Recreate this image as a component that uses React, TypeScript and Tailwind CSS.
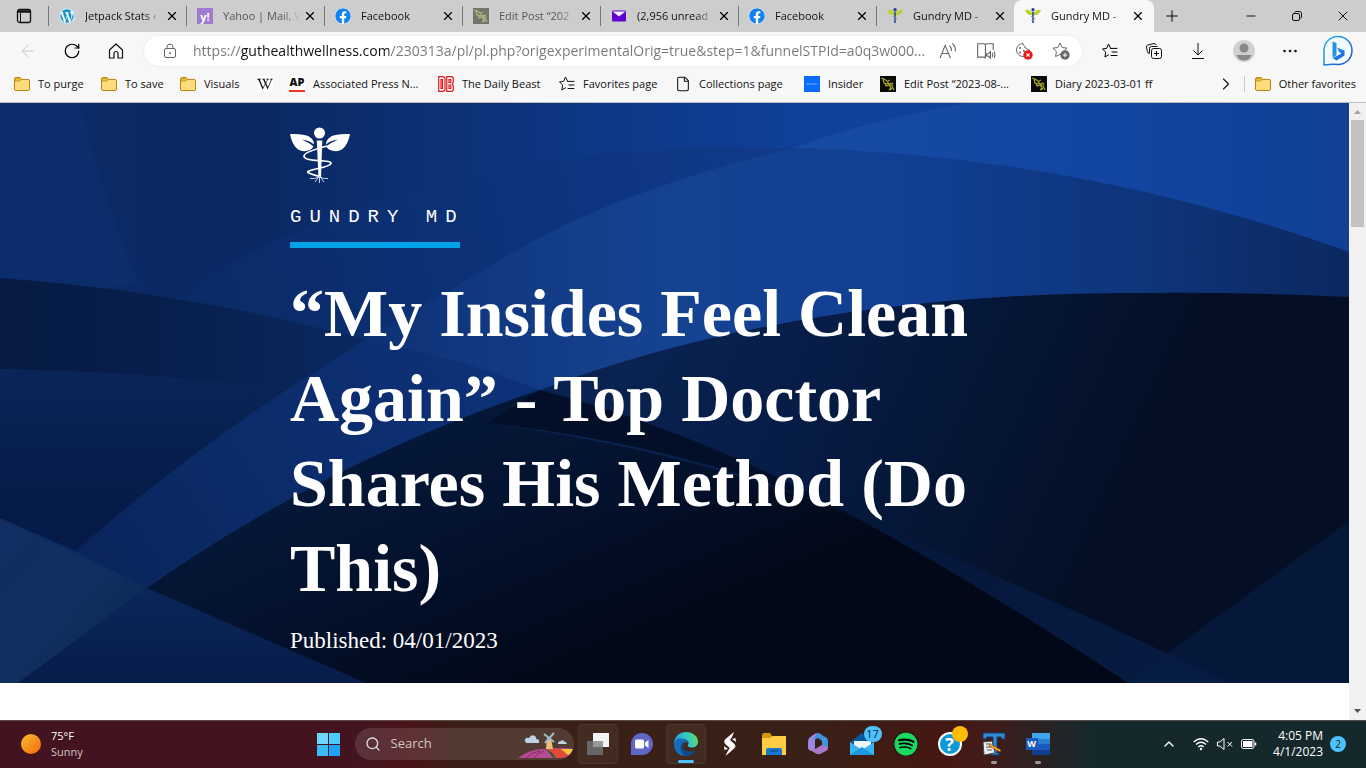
import React from "react";
import {
  ArrowLeft,
  ChevronRight,
  ChevronUp,
  File,
  Lock,
  Minus,
  Plus,
  RotateCw,
  Search,
  X,
} from "lucide-react";
import { FaFacebook, FaSpotify, FaWikipediaW, FaWordpress } from "react-icons/fa";

const FolderIcon = () => (
  <svg className="h-4 w-4 shrink-0" viewBox="0 0 16 16">
    <path d="M.5 3.2A1.7 1.7 0 0 1 2.2 1.5H6L7.5 3.4H14A1.5 1.5 0 0 1 15.5 5v8A1.5 1.5 0 0 1 14 14.5H2A1.5 1.5 0 0 1 .5 13z" fill="#ffdc7c" stroke="#b8860b" />
    <path d="M1 5V3.2Q1 2 2.2 2H5.8L7 3.6 5.8 5z" fill="#eebd3b" stroke="#b8860b" strokeWidth=".7" />
  </svg>
);

const GundryLeaf = () => (
  <svg className="h-4 w-4 shrink-0" viewBox="0 0 16 16">
    <path d="M0 2Q5 1 7 4.5L7 7Q2 8 0 2zM16 2Q11 1 9 4.5L9 7Q14 8 16 2z" fill="#b6d433" />
    <circle cx="8" cy="1.8" r="1.7" fill="#27408b" />
    <path d="M8 4v11" stroke="#3c5590" strokeWidth="1.8" />
    <path d="M6 8.5q4 1 4 2t-3.5 2" stroke="#7f93bd" fill="none" />
  </svg>
);

const SketchIcon = ({ faded }: { faded?: boolean }) => (
  <svg className="h-4 w-4 shrink-0" viewBox="0 0 16 16">
    <rect width="16" height="16" fill={faded ? "#74746c" : "#0b0b06"} />
    <path d="M1 2l3 1 3 2 2 3 3 2 2 4M3 3l1 4 4 1M5 7l1 3 3-1 2 3-2 2M8 5l2-1M9 8l3-1 1 2M12 12l-2 2" stroke={faded ? "#b5b878" : "#a7a52d"} strokeWidth="1.2" fill="none" />
  </svg>
);

const StarList = ({ className }: { className: string }) => (
  <svg className={className} viewBox="0 0 16 16" fill="none" stroke="currentColor" strokeLinecap="round" strokeLinejoin="round">
    <path d="M8.6 5.4 6.5 1 4.700 5.3.5 6l3.2 3-.8 5 3.6-2.200M8.600 5.400H15M10 9h5M9 12.500h6" />
  </svg>
);

const YahooIcon = () => (
  <span className="flex h-4 w-4 shrink-0 items-center justify-center bg-[#a17bd0] text-[11px] leading-none font-bold text-white">y!</span>
);

const MailSmall = () => (
  <svg className="h-4 w-4 shrink-0" viewBox="0 0 16 16">
    <rect x="1" y="2.5" width="14" height="11" rx="1" fill="#6001d2" />
    <path d="M1.5 3.5h13L8 8.5z" fill="#f4e8ff" />
  </svg>
);

const facebook = <FaFacebook className="h-4 w-4 shrink-0 rounded-full bg-white text-[#0f82f5]" />;

const tabs = [
  { icon: <FaWordpress className="h-4 w-4 shrink-0 rounded-full bg-white text-[#1794c4]" />, title: "Jetpack Stats ‹" },
  { icon: <YahooIcon />, title: "Yahoo | Mail, V", faded: true },
  { icon: facebook, title: "Facebook" },
  { icon: <SketchIcon faded />, title: "Edit Post “202", faded: true },
  { icon: <MailSmall />, title: "(2,956 unread" },
  { icon: facebook, title: "Facebook" },
  { icon: <GundryLeaf />, title: "Gundry MD -" },
  { icon: <GundryLeaf />, title: "Gundry MD -", active: true },
];

const favorites = [
  { width: "w-[71px]", icon: <FolderIcon />, label: "To purge" },
  { width: "w-[63px]", icon: <FolderIcon />, label: "To save" },
  { width: "w-[61px]", icon: <FolderIcon />, label: "Visuals" },
  { width: "w-4", icon: <FaWikipediaW className="h-4 w-4 shrink-0 rounded bg-white" />, label: "" },
  {
    width: "w-[133px]",
    icon: <span className="flex h-4 w-4 shrink-0 justify-center border-b-2 border-[#f0322d] bg-white text-[11px] leading-3 font-black">AP</span>,
    label: "Associated Press N...",
  },
  {
    width: "w-[105px]",
    icon: (
      <svg className="h-4 w-4 shrink-0" viewBox="0 0 16 16" fill="#fff" stroke="#e3151a" strokeWidth="1.2">
        <path d="M.7.7h4Q7 .7 7 3v10q0 2.3-2.3 2.3h-4zM3 3.500v9h1.500v-9zM8.800.7h4Q15.300.7 15.300 3v3l-1 2 1 2v3q0 2.300-2.300 2.300H8.800zM11 3.500v3h1.800v-3zM11 9v3.500h1.800V9z" />
      </svg>
    ),
    label: "The Daily Beast",
  },
  { width: "w-[100px]", icon: <StarList className="h-4 w-4 shrink-0" />, label: "Favorites page" },
  { width: "w-[113px]", icon: <File className="h-4 w-4 shrink-0" strokeWidth={1.6} />, label: "Collections page" },
  {
    width: "w-[60px]",
    icon: (
      <svg className="h-4 w-4 shrink-0" viewBox="0 0 16 16">
        <rect width="16" height="16" fill="#0a6cff" />
        <path d="M2.5 8h11" stroke="#8dbcff" strokeDasharray="1.5 .5" />
      </svg>
    ),
    label: "Insider",
  },
  { width: "w-[135px]", icon: <SketchIcon />, label: "Edit Post “2023-08-..." },
  { width: "w-[128px]", icon: <SketchIcon />, label: "Diary 2023-03-01 ff" },
];

const TabStrip = () => (
  <div className="flex h-8 bg-[#cdcdcd]">
    <button aria-label="Tab actions" className="flex w-12 shrink-0 items-center justify-center">
      <svg className="h-4 w-4" viewBox="0 0 16 16" fill="none" stroke="#111">
        <rect x="1.5" y="1.5" width="13" height="13" rx="2" strokeWidth="1.3" />
        <path d="M2 3.5h12" strokeWidth="2.500" />
        <path d="M4.5 5v9" />
      </svg>
    </button>
    <div role="tablist" className="flex min-w-0">
      {tabs.map((tab, i) => (
        <div
          key={i}
          className={
            tab.active
              ? "flex w-[140px] items-center rounded-t-lg bg-[#f7f7f7] pl-[11px]"
              : "flex w-[138px] items-center bg-[linear-gradient(#777,#777)] bg-[length:1px_20px] bg-[position:0_6px] bg-no-repeat pl-[11px]"
          }
        >
          {tab.icon}
          <button
            role="tab"
            aria-selected={!!tab.active}
            className={
              "ml-2.5 w-[78px] text-left text-[11px] whitespace-nowrap [mask-image:linear-gradient(to_right,black_75%,transparent)] " +
              (tab.faded ? "text-[#555]" : "text-[#111]")
            }
          >
            {tab.title}
          </button>
          <button aria-label="Close tab" className="ml-px flex h-4 w-4 items-center justify-center">
            <X className="h-3.5 w-3.5" strokeWidth={2} />
          </button>
        </div>
      ))}
    </div>
    <button aria-label="New tab" className="flex w-9 items-center justify-center">
      <Plus className="h-[18px] w-[18px]" strokeWidth={1.3} />
    </button>
    <div className="ml-auto flex">
      <button aria-label="Minimize" className="flex w-[46px] items-center justify-center">
        <Minus className="h-3.5 w-3.5" strokeWidth={1.5} />
      </button>
      <button aria-label="Restore" className="flex w-[46px] items-center justify-center">
        <svg className="h-2.5 w-2.5" viewBox="0 0 10 10" fill="none" stroke="#111">
          <rect x=".5" y="2.5" width="7" height="7" rx="1.5" />
          <path d="M2.5 1.5Q3 .5 4 .5h3.500a2 2 0 0 1 2 2V6q0 1-1 1.500" />
        </svg>
      </button>
      <button aria-label="Close" className="flex w-[46px] items-center justify-center">
        <X className="h-4 w-4" strokeWidth={1.4} />
      </button>
    </div>
  </div>
);

const AddressBar = () => (
  <div className="mx-1.5 flex h-[30px] min-w-0 flex-1 items-center rounded-full bg-white pr-3 pl-[18px] shadow-[0_0_3px_rgba(0,0,0,0.08)]">
    <svg className="h-4 w-4 shrink-0" viewBox="0 0 16 16" fill="none" stroke="#666">
      <rect x="2.5" y="5.5" width="11" height="9" rx="1.5" />
      <path d="M5 5.500V4a3 3 0 0 1 6 0v1.500" />
      <circle cx="8" cy="10" r=".6" fill="#666" />
    </svg>
    <input
      aria-label="Address"
      className="ml-[15px] min-w-0 flex-1 bg-[linear-gradient(to_right,#767676_48px,#111_48px,#111_196px,#767676_196px)] bg-clip-text text-sm text-transparent outline-none"
      defaultValue="https://guthealthwellness.com/230313a/pl/pl.php?origexperimentalOrig=true&step=1&funnelSTPId=a0q3w000..."
    />
    <div className="flex shrink-0 gap-[19px] text-[#666]">
      <button aria-label="Read aloud">
        <svg className="h-[18px] w-[18px]" viewBox="0 0 16 16" fill="none" stroke="currentColor" strokeLinecap="round">
          <path d="M1 14 5.500 3 10 14M2.600 10.200h5.800M9.500 3.500q1.700 1.500 1.500 4M12 1.500q3 2.500 2.500 6.500" />
        </svg>
      </button>
      <button aria-label="Immersive reader">
        <svg className="h-[18px] w-5" viewBox="0 0 18 16" fill="none" stroke="currentColor">
          <path d="M8.500 2.500Q8 1.500 7 1.500H1.500v12H7q1 0 1.500 1M8.500 2.500v12M8.500 2.500Q9 1.500 10 1.500h5.500V7" />
          <path d="M9.500 10.500h1.500l2-2v6l-2-2H9.500zM14.500 9.500q1 2 0 4M16.300 8.500q1.300 3 0 6" />
        </svg>
      </button>
      <button aria-label="Cookies blocked">
        <svg className="h-[18px] w-[18px]" viewBox="0 0 18 18">
          <path d="M8 1.500A6.500 6.500 0 1 0 14.500 8q-2 .5-2.500-1.500Q9.500 6.500 9.500 4 8 3.500 8 1.500z" fill="none" stroke="currentColor" />
          <circle cx="5" cy="6" r="1" fill="currentColor" />
          <circle cx="5" cy="10.500" r="1" fill="currentColor" />
          <circle cx="9" cy="9" r="1" fill="currentColor" />
          <circle cx="13" cy="13" r="4.700" fill="#f01414" />
          <path d="m11.400 11.400 3.200 3.200m0-3.200-3.200 3.200" stroke="#fff" strokeWidth="1.200" />
        </svg>
      </button>
      <button aria-label="Add to favorites">
        <svg className="h-[18px] w-[18px]" viewBox="0 0 18 18">
          <path d="M8 1l2.200 4.500 4.900.7-3.500 3.400.8 5L8 12.300 3.600 14.600l.8-5L.9 6.200l4.900-.7z" fill="none" stroke="currentColor" strokeLinejoin="round" />
          <circle cx="13" cy="13" r="4.700" fill="#666" />
          <path d="M13 10.700v4.600M10.700 13h4.600" stroke="#fff" />
        </svg>
      </button>
    </div>
  </div>
);

const Toolbar = () => (
  <div className="flex h-[38px] items-center pl-1.5">
    <button aria-label="Back" className="flex w-11 justify-center text-[#c8c8c8]">
      <ArrowLeft className="h-5 w-5" strokeWidth={1.2} />
    </button>
    <button aria-label="Refresh" className="flex w-11 justify-center">
      <RotateCw className="h-[18px] w-[18px]" strokeWidth={1.6} />
    </button>
    <button aria-label="Home" className="flex w-11 justify-center">
      <svg className="h-4 w-4" viewBox="0 0 16 16" fill="none" stroke="#111" strokeWidth="1.2" strokeLinejoin="round">
        <path d="M1.500 7 8 1l6.500 6v8H10v-4.500a2 2 0 0 0-4 0V15H1.500z" />
      </svg>
    </button>
    <AddressBar />
    <button aria-label="Favorites" className="flex w-11 justify-center">
      <StarList className="h-4 w-4" />
    </button>
    <button aria-label="Collections" className="flex w-11 justify-center">
      <svg className="h-4 w-4" viewBox="0 0 16 16" fill="none" stroke="#111" strokeLinejoin="round">
        <path d="M3 10.500Q1.500 10 1.300 8.500L.5 4Q.3 2.500 1.800 2L8 .6q1.500-.3 2.200 1.400" />
        <rect x="5.500" y="5.500" width="10" height="10" rx="2" />
        <path d="M3.500 10.500v-5q0-2 2-2h6M10.500 8v5M8 10.500h5" />
      </svg>
    </button>
    <button aria-label="Downloads" className="flex w-11 justify-center">
      <svg className="h-4 w-4" viewBox="0 0 16 16" fill="none" stroke="#111">
        <path d="M8 0v12M3.500 7.500 8 12l4.500-4.500M2 15.500h12" />
      </svg>
    </button>
    <button aria-label="Profile" className="flex w-12 justify-center">
      <svg className="h-[22px] w-[22px]" viewBox="0 0 22 22">
        <circle cx="11" cy="11" r="11" fill="#d2d0ce" />
        <circle cx="11" cy="8" r="4.500" fill="#8a8886" />
        <path d="M3.500 15h15q-2 5.500-7.500 5.500T3.500 15z" fill="#8a8886" />
      </svg>
    </button>
    <button aria-label="Settings and more" className="flex w-11 justify-center">
      <svg className="h-4 w-4" viewBox="0 0 16 16" fill="#111">
        <circle cx="2.500" cy="8" r="1.300" />
        <circle cx="8" cy="8" r="1.300" />
        <circle cx="13.500" cy="8" r="1.300" />
      </svg>
    </button>
    <button aria-label="Bing" className="flex w-[54px] justify-center pr-0.5">
      <svg className="h-8 w-8" viewBox="0 0 32 32">
        <defs>
          <linearGradient id="bing" x1="0" y1="0" x2="1" y2="1">
            <stop stopColor="#27b7ee" />
            <stop offset="1" stopColor="#174ed0" />
          </linearGradient>
        </defs>
        <path d="M2 30V15A14 14 0 1 1 16 29.500Q10 29 2 30z" fill="#f4fbff" stroke="url(#bing)" strokeWidth="1.500" />
        <path d="M10.500 6.500l4 1.500v12l-4 3z" fill="#2394ec" />
        <path d="M10.500 23l4 2.500 8-5v-5l-7.500-3 2 4.500 2.500 1.500z" fill="url(#bing)" />
      </svg>
    </button>
  </div>
);

const FavoritesBar = () => (
  <nav className="flex h-[33px] items-center border-b border-[#bdbdbd] pr-2.5 pb-1 pl-3.5 text-[11px] text-[#111]">
    <div className="flex min-w-0 gap-4 overflow-hidden">
      {favorites.map((item) => (
        <a key={item.label} href="#" className={"flex shrink-0 items-center gap-2 whitespace-nowrap " + item.width}>
          {item.icon}
          {item.label}
        </a>
      ))}
    </div>
    <button aria-label="More favorites" className="ml-auto">
      <ChevronRight className="h-5 w-5" strokeWidth={1.3} />
    </button>
    <span className="mr-2.5 ml-2 h-4 w-px bg-[#c8c8c8]" />
    <a href="#" className="flex items-center gap-2 whitespace-nowrap">
      <FolderIcon />
      Other favorites
    </a>
  </nav>
);

const HeroBackground = () => (
  <svg className="absolute inset-0 h-full w-full" viewBox="0 103 1349 580" preserveAspectRatio="none">
    <defs>
      <linearGradient id="base" x1="0" x2="1" y1="0" y2="0">
        <stop stopColor="#0b2a66" />
        <stop offset=".2" stopColor="#0a2964" />
        <stop offset=".4" stopColor="#0d357f" />
        <stop offset=".6" stopColor="#10409a" />
        <stop offset="1" stopColor="#123f95" />
      </linearGradient>
      <linearGradient id="under" gradientUnits="userSpaceOnUse" x1="223" x2="780" y1="300" y2="150">
        <stop stopColor="#0b2b68" />
        <stop offset=".5" stopColor="#0c3279" />
        <stop offset="1" stopColor="#103a8a" />
      </linearGradient>
      <linearGradient id="sky" x1="0" x2="1" y1="0" y2="0">
        <stop stopColor="#174aa2" />
        <stop offset=".5" stopColor="#1246a3" />
        <stop offset="1" stopColor="#103f95" />
      </linearGradient>
      <linearGradient id="ray" gradientUnits="userSpaceOnUse" x1="360" x2="1349" y1="0" y2="0">
        <stop stopColor="#0e3175" />
        <stop offset=".3" stopColor="#154290" />
        <stop offset=".55" stopColor="#113f93" />
        <stop offset=".8" stopColor="#0e3479" />
        <stop offset="1" stopColor="#0b2860" />
      </linearGradient>
      <linearGradient id="tail" gradientUnits="userSpaceOnUse" x1="480" x2="60" y1="350" y2="640">
        <stop stopColor="#0d3178" />
        <stop offset=".6" stopColor="#0b2a66" />
        <stop offset="1" stopColor="#092256" />
      </linearGradient>
      <linearGradient id="band" x1="0" x2="1" y1="0" y2="0">
        <stop stopColor="#061a42" />
        <stop offset=".6" stopColor="#082150" />
        <stop offset="1" stopColor="#0a2860" />
      </linearGradient>
      <linearGradient id="slope" x1="0" x2="0" y1="0" y2="1">
        <stop stopColor="#0a2558" />
        <stop offset=".8" stopColor="#051a46" />
        <stop offset="1" stopColor="#061b47" />
      </linearGradient>
      <linearGradient id="dune" gradientUnits="userSpaceOnUse" x1="620" x2="1080" y1="390" y2="600">
        <stop stopColor="#09224f" />
        <stop offset=".3" stopColor="#071d48" />
        <stop offset=".65" stopColor="#051635" />
        <stop offset="1" stopColor="#040f25" />
      </linearGradient>
      <linearGradient id="deep" gradientUnits="userSpaceOnUse" x1="440" x2="540" y1="440" y2="683">
        <stop stopColor="#051737" />
        <stop offset=".5" stopColor="#03102a" />
        <stop offset="1" stopColor="#020817" />
      </linearGradient>
      <linearGradient id="glint" gradientUnits="userSpaceOnUse" x1="855" x2="1170" y1="517" y2="683">
        <stop stopColor="#05173a" />
        <stop offset="1" stopColor="#071a41" />
      </linearGradient>
      <linearGradient id="corner" x1="0" x2="1" y1="0" y2="1">
        <stop stopColor="#102e62" />
        <stop offset=".5" stopColor="#10305f" />
        <stop offset="1" stopColor="#0a2450" />
      </linearGradient>
      <linearGradient id="foot" x1="0" x2="0" y1="0" y2="1">
        <stop stopColor="#0a2759" />
        <stop offset="1" stopColor="#071c49" />
      </linearGradient>
    </defs>
    <rect y="103" width="1349" height="580" fill="url(#base)" />
    <path d="M0 103H80Q100 190 138 284L0 300z" fill="#0d3072" opacity=".6" />
    <path d="M138 340Q210 276 223 269 430 150 745 147L793 148 400 420H200z" fill="url(#under)" />
    <path d="M793 148Q870 120 967 103H1349V252Q1080 155 793 148z" fill="url(#sky)" />
    <path d="M0 278Q190 292 366 340L223 436 76 551 0 518z" fill="url(#band)" />
    <path d="M0 369Q140 371 290 390L223 436 76 551 0 518z" fill="url(#slope)" />
    <path d="M366 340Q200 440 76 551L147 588 540 470V386Q450 355 366 340z" fill="url(#tail)" />
    <path d="M793 148Q600 195 491 266L366 340Q450 355 540 390L700 400H1349V252Q1080 155 793 148z" fill="url(#ray)" />
    <path d="M18 683 147 588Q330 460 540 390 800 292 1142 293 1250 292 1349 297V683z" fill="url(#dune)" />
    <path d="M18 683 147 588Q330 460 540 390L487 423Q690 450 855 517 990 590 1128 683z" fill="url(#deep)" />
    <path d="M540 390Q700 432 855 517 690 445 487 423z" fill="#030f28" />
    <path d="M855 517Q1030 588 1230 683H1128Q980 585 855 517z" fill="url(#glint)" />
    <path d="M1349 521 1173 649 1128 683H1349z" fill="#081e48" opacity=".6" />
    <path d="M0 518 147 588 18 683H0z" fill="url(#corner)" />
    <path d="M147 588 366 683H18z" fill="url(#foot)" />
  </svg>
);

const GundryLogo = () => (
  <svg className="h-[60px] w-[60px]" viewBox="0 0 60 60" fill="#fff">
    <circle cx="29.500" cy="6" r="5.500" />
    <path d="M0 7q14-.5 19 2.500 5 3 5 8-4-4-12-5 7 3 11.500 7Q20 25 12 24 3 22 0 7zM60 7q-14-.5-19 2.500-5 3-5 8 4-4 12-5-7 3-12 7Q40 25 48 24 57 22 60 7z" />
    <path d="M26.800 13.500h5.500L31 51h-2.500z" />
    <path d="M37 19Q14 25 14 29t14 4.500 13 3-13 5-10 4 12 4" fill="none" stroke="#fff" strokeWidth="1.700" />
    <path d="M29 50q-3 2-9 1.500M30 50q3 2 8 1.500M28 51l-3 4M31 51l3 4M29.500 49v7" fill="none" stroke="#c3d2f2" />
  </svg>
);

const Article = () => (
  <main className="min-h-0 flex-1 overflow-hidden bg-white">
    <header className="relative overflow-hidden bg-[#061a3e] pt-6 pb-[26px]">
      <HeroBackground />
      <div className="relative mx-auto w-[58%] max-w-[769px] text-white">
        <GundryLogo />
        <p className="mt-4 font-['Liberation_Mono',monospace] text-[19px] leading-7 tracking-[8px] whitespace-nowrap">GUNDRY MD</p>
        <div className="mt-[11px] h-1.5 w-[170px] bg-[#00a3e8]" />
        <h1 className="mt-[23px] font-['Liberation_Serif',serif] text-[68px] leading-[85px] font-bold">
          “My Insides Feel Clean Again” - Top Doctor Shares His Method (Do This)
        </h1>
        <p className="mt-3.5 font-['Liberation_Serif',serif] text-[23px] leading-8">Published: 04/01/2023</p>
      </div>
    </header>
  </main>
);

const ScrollBar = () => (
  <div className="flex w-[17px] shrink-0 flex-col items-center bg-[#f1f1f1]">
    <svg className="h-[17px] w-[17px]" viewBox="0 0 17 17">
      <path d="M5 11h7L8.500 7z" fill="#a3a3a3" />
    </svg>
    <div className="h-[107px] w-[13px] bg-[#c1c1c1]" />
    <svg className="mt-auto h-[17px] w-[17px]" viewBox="0 0 17 17">
      <path d="M5 6h7l-3.500 4z" fill="#505050" />
    </svg>
  </div>
);

const apps = [
  {
    name: "Task view",
    framed: true,
    icon: (
      <svg className="h-6 w-6" viewBox="0 0 24 24">
        <rect x="7" y="1" width="16" height="14" fill="#f2f2f2" />
        <rect x="1" y="9" width="16" height="14" fill="#666" />
        <path d="M7 9h10v6H7z" fill="#999" />
      </svg>
    ),
  },
  {
    name: "Chat",
    icon: (
      <svg className="h-6 w-6" viewBox="0 0 24 24">
        <path d="M1 23V12A11 11 0 1 1 12 23z" fill="#6065c8" />
        <rect x="5" y="7.500" width="9" height="9" rx="1.500" fill="#fff" />
        <path d="m15 10.500 3.500-2.500v8L15 13.500z" fill="#fff" />
      </svg>
    ),
  },
  {
    name: "Edge",
    framed: true,
    mark: "h-[3px] w-4 bg-[#4cc2ff]",
    icon: (
      <svg className="h-6 w-6" viewBox="0 0 24 24">
        <defs>
          <linearGradient id="edge" x1="0" x2="1" y1=".5" y2=".3">
            <stop stopColor="#24a2df" />
            <stop offset=".6" stopColor="#36c8c5" />
            <stop offset="1" stopColor="#63df53" />
          </linearGradient>
        </defs>
        <path d="M0 12C0 5 5 0 12 0s12 4.500 12 9.500c0 4-3 6-6 6s-5-1-4-2.500 1-3.500-1.500-5S2 6 0 12z" fill="url(#edge)" />
        <path d="M0 12C1 6 6 5.500 10 7c2 .8 3.500 2 3.800 4C10 9 8 12 8.500 15c.6 4 5.500 7 12 4.500C14 27 0 25 0 12z" fill="#126dbd" />
        <path d="M9.500 9.500C5 13 5.500 21 12 24c4 0 7-2 9.500-5.500-7 2.500-13 0-13-4.500 0-2 .5-3.500 1-4.500z" fill="#114a8b" />
      </svg>
    ),
  },
  {
    name: "Streamlabs",
    icon: (
      <svg className="h-6 w-6" viewBox="0 0 24 24" fill="#fff">
        <path d="M16 0Q11 4 7 7.500q-1 1-.7 2.500.3 1.500 1.500 2.500l4 3.500Q9 20 7.500 24q5-4 9.500-8.500 1.200-1.500-.5-3.500L12 8q3-4 4-8z" />
        <path d="m6 14 4 3-3.500 1zM18 10l-4-3 3.500-1z" />
      </svg>
    ),
  },
  {
    name: "File Explorer",
    icon: (
      <svg className="h-6 w-6" viewBox="0 0 24 24">
        <path d="M0 3q0-2 2-2h6l2 3h14v7H0z" fill="#d99608" />
        <path d="M0 6h8l3-2h13v19H0z" fill="#ffcc45" />
        <path d="M4 23v-5q0-2 2-2h12q2 0 2 2v5z" fill="#1378ce" />
        <path d="M8 19h8" stroke="#083d76" />
      </svg>
    ),
  },
  {
    name: "Microsoft 365",
    icon: (
      <svg className="h-6 w-6" viewBox="0 0 24 24">
        <path d="M12 1Q9 1 7 3L3 6Q2 8 2 12v4q0 2 4 3l3-2V8z" fill="#9a86e3" />
        <path d="M12 1q2 0 4 2l5 3q1 1 1 4v7q-3-2-6-3V9l-4-3-4 2Q8 4 12 1z" fill="#3f94db" />
        <path d="M22 15q0 3-2 4l-6 3q-2 1-5-1l-5-3 5-1 7-4z" fill="#ab78c8" />
      </svg>
    ),
  },
  {
    name: "Mail",
    badge: "17",
    icon: (
      <svg className="h-6 w-6" viewBox="0 0 24 24">
        <path d="M0 10 12 1l12 9v13H0z" fill="#0b589d" />
        <path d="M4 9h17v8H4z" fill="#eef7ff" />
        <path d="m0 10 12 8 12-8v13H0z" fill="#38b6f2" />
        <path d="m0 23 12-8 12 8z" fill="#2096df" />
      </svg>
    ),
  },
  { name: "Spotify", icon: <FaSpotify className="h-6 w-6 rounded-full bg-black text-[#1ed760]" /> },
  {
    name: "Get help",
    alert: true,
    icon: (
      <span className="flex h-6 w-6 items-center justify-center rounded-full border-2 border-white bg-[#0b99d7] text-lg leading-none font-bold text-white">?</span>
    ),
  },
  {
    name: "Text editor",
    mark: "h-[3px] w-1.5 bg-[#9a9a9a]",
    icon: (
      <svg className="h-6 w-6" viewBox="0 0 24 24">
        <path d="M1 1h22v6h-3l-1-2h-4v16h2v2H9v-2h2V5H5L4 7H1z" fill="#318bd1" stroke="#143875" />
        <path d="m1 10 9-1 3 12-11 2z" fill="#eee" stroke="#444" />
        <path d="M4 12h5M4 15h6M5 18h5" stroke="#555" />
        <path d="m8 12 11 6-1 2-11-6z" fill="#f6ad2b" stroke="#853b16" strokeWidth=".6" />
      </svg>
    ),
  },
  {
    name: "Word",
    mark: "h-[3px] w-1.5 bg-[#9a9a9a]",
    icon: (
      <span className="relative flex h-[22px] w-6 flex-col">
        <span className="ml-1.5 flex-1 bg-[#41a5ee]" />
        <span className="ml-1.5 flex-1 bg-[#2b7cd3]" />
        <span className="ml-1.5 flex-1 bg-[#185abd]" />
        <span className="ml-1.5 flex-1 bg-[#103f91]" />
        <span className="absolute top-[5px] left-0 h-3 w-3 bg-[#185abd] text-center text-[9px] leading-3 font-bold text-white">W</span>
      </span>
    ),
  },
];

const Landscape = () => (
  <svg className="h-8 w-14 shrink-0" viewBox="0 0 56 32">
    <path d="M0 30Q12 21 25 21 45 19 55 21q-3 9-12 9H2z" fill="#b64b91" />
    <path d="M8 30q6-6 14-7M16 30q3-5 10-7" stroke="#7d2c74" fill="none" />
    <path d="M26 21q9 1 12 9h-3q-5-8-9-9z" fill="#3e5a35" />
    <path d="M29 21q15-1 22 1-2 8-9 8h-4q-3-6-9-9z" fill="#e24a38" />
    <path d="M43 21h12q-2 5-5 6z" fill="#f4c63a" />
    <path d="m29 10-1 11h7L33 10z" fill="#ebbd79" />
    <path d="m26 6 10 8M36 5l-9 10" stroke="#9bbcc3" strokeWidth="2" />
    <path d="M9 15q-3-1-2-4 2-2 4-1 2-4 6-2 2 2 1 3 4 0 3 4zM40 16q0-3 3-3 2-2 4 1 2 0 2 2z" fill="#bed3e3" />
  </svg>
);

const Taskbar = () => (
  <footer className="grid h-12 shrink-0 grid-cols-[1fr_auto_1fr] items-center bg-[linear-gradient(to_right,#431420_0%,#431420_26%,#4a1418_30%,#3a2016_34%,#392016_60%,#461712_69%,#421b18_72%,#15292d_80%,#15292d_100%)] text-[11px] text-white shadow-[inset_0_1px_#584a47]">
    <a href="#" className="flex items-center pl-[21px]">
      <span className="h-5 w-5 rounded-full bg-linear-to-br from-[#f5bd2c] to-[#f2660c]" />
      <span className="ml-2.5 leading-4">
        75°F
        <span className="block text-[#d0c3c6]">Sunny</span>
      </span>
    </a>
    <div className="flex items-center">
      <button aria-label="Start" className="flex w-11 justify-center">
        <span className="grid h-[23px] w-[23px] grid-cols-2 gap-px">
          <span className="bg-[#6dd7fb]" />
          <span className="bg-[#4bcdfb]" />
          <span className="bg-[#38bdfa]" />
          <span className="bg-[#1aa5fb]" />
        </span>
      </button>
      <label className="mr-0.5 ml-1 flex h-8 w-[219px] items-center overflow-hidden rounded-full bg-white/12 pl-2.5 text-[#ddd]">
        <Search className="h-4 w-4 shrink-0" strokeWidth={2} />
        <input aria-label="Search" placeholder="Search" className="ml-2.5 min-w-0 flex-1 text-[13px] outline-none placeholder:text-[#d0c7c5]" />
        <Landscape />
      </label>
      {apps.map((app) => (
        <button key={app.name} aria-label={app.name} className="flex w-11 justify-center">
          <span className={"relative flex h-10 w-10 items-center justify-center rounded " + (app.framed ? "border border-white/5 bg-white/5" : "")}>
            {app.icon}
            {app.mark && <span className={"absolute bottom-0 rounded-full " + app.mark} />}
            {app.badge && (
              <span className="absolute top-0.5 right-0 h-4 w-[18px] rounded-full bg-[#4cc2ff] text-center text-[11px] leading-4 text-[#10222c]">{app.badge}</span>
            )}
            {app.alert && <span className="absolute top-0.5 right-0.5 h-4 w-4 rounded-full bg-[#ffbd0a]" />}
          </span>
        </button>
      ))}
    </div>
    <div className="flex items-center justify-end pr-5">
      <button aria-label="Show hidden icons" className="mr-4">
        <ChevronUp className="h-4 w-4" strokeWidth={2} />
      </button>
      <button aria-label="Network, volume and battery" className="mr-4 flex items-center gap-2">
        <svg className="h-4 w-4" viewBox="0 0 16 16" fill="none" stroke="#fff">
          <path d="M.7 6q7.300-6.500 14.600 0M3 8.500q5-4.500 10 0M5.300 11q2.700-2.500 5.400 0" strokeWidth="1.200" />
          <circle cx="8" cy="13" r="1.200" fill="#fff" stroke="none" />
        </svg>
        <svg className="h-4 w-4" viewBox="0 0 16 16" fill="none" stroke="#fff">
          <path d="M.5 6H3l4-3.500v11L3 10H.5zM10.500 6l4.500 4.500m0-4.500-4.500 4.500" />
        </svg>
        <svg className="h-4 w-4" viewBox="0 0 16 16" fill="none" stroke="#fff">
          <rect x=".5" y="3.500" width="12.500" height="9" rx="2" />
          <rect x="2.500" y="5.500" width="8.500" height="5" fill="#fff" />
          <path d="M14.500 6.500v3" strokeWidth="1.500" />
        </svg>
      </button>
      <span className="text-right text-xs leading-4 whitespace-nowrap">
        4:05 PM
        <br />
        4/1/2023
      </span>
      <span className="ml-[7px] h-4 w-4 rounded-full bg-[#4cc2ff] text-center text-[10px] leading-4 text-[#10222c]">2</span>
    </div>
  </footer>
);

const App = () => (
  <div className="flex h-screen flex-col overflow-hidden font-['Open_Sans',sans-serif]">
    <div className="shrink-0 bg-[#f7f7f7]">
      <TabStrip />
      <Toolbar />
      <FavoritesBar />
    </div>
    <div className="flex min-h-0 flex-1">
      <Article />
      <ScrollBar />
    </div>
    <Taskbar />
  </div>
);

export default App;
